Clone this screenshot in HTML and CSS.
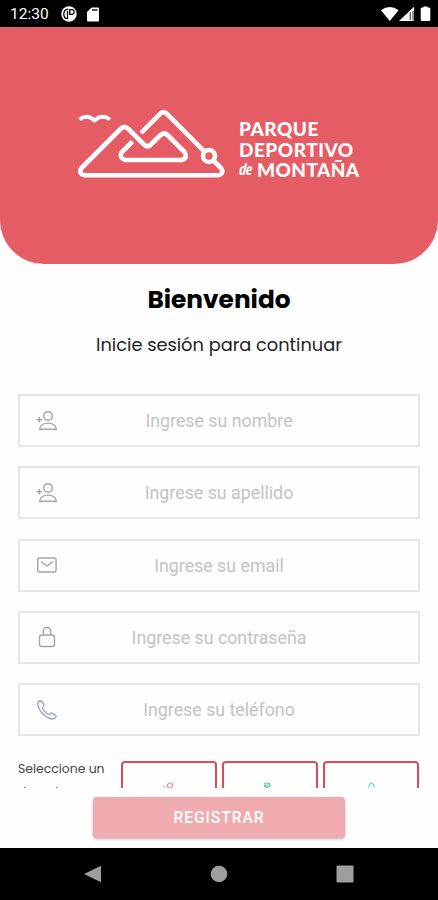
FILE: index.html
```html
<!DOCTYPE html>
<html lang="es">
<head>
	<meta charset="utf-8">
	<title>Parque Deportivo de Montaña</title>
	<link rel="stylesheet" href="styles.css">
</head>
<body>
	<div class="status-bar">
		<span class="time">12:30</span>
		<svg class="app-icon" width="16" height="16" viewBox="0 0 16 16">
			<circle cx="8" cy="8" r="7.7" fill="#fff"/>
			<path d="M7.300 3.200Q2.800 3.500 2.800 8t3.700 4.700V5" fill="none" stroke="#000" stroke-width="1.300"/>
			<path d="M8.800 3.700h2.400q1.900.2 1.900 2.300t-1.900 2.300H8.800z" fill="none" stroke="#000" stroke-width="1.300"/>
		</svg>
		<svg class="card-icon" width="12" height="15" viewBox="0 0 12 15">
			<path d="M4.500.5h6.300q1.200 0 1.200 1.200v11.600q0 1.200-1.200 1.200H1.200Q0 14.500 0 13.300V5z" fill="#fff"/>
			<path d="M5 3h5.500" stroke="#555" stroke-width="2"/>
		</svg>
		<svg class="signals" width="50" height="16" viewBox="0 0 50 16">
			<path d="M0 4.300Q8.800-2.300 17.600 4.300L8.800 15z" fill="#fff"/>
			<path d="M18 15 33 .8V15z" fill="#fff"/>
			<path d="M29.300 6.300v7.500M32 5v9.500" stroke="#444" stroke-width="1.200"/>
			<path d="M42.500 1.500V.5h4v1H48q1.300 0 1.300 1.300v11q0 1.200-1.300 1.200h-7q-1.300 0-1.300-1.200v-11q0-1.300 1.300-1.300z" fill="#fff"/>
		</svg>
	</div>

	<header class="hero">
		<svg class="mountains" width="160" height="90" viewBox="0 0 160 90">
			<g fill="none" stroke="#fff" stroke-width="4.600" stroke-linejoin="round">
				<path d="M71 33 89.500 14.300Q93.500 10.300 97.500 14.300L134 51.200"/>
				<circle cx="139" cy="56" r="6"/>
				<path d="M143.500 60.500 150.500 67.500Q155 73 148.500 75.300H14.500Q8 73.500 11.500 68L50.500 29Q54.500 25 58.500 29L74 44.500Q77.500 48 81 44.500L90 35.500Q94 31.500 98 35.500L114.500 52Q118 58 112 60H55Q49 58 51.500 52.500L62.500 41.500"/>
				<path stroke-width="4" d="M9.500 19.500Q17 13.500 24.500 20.500 32 13.500 40 19.500"/>
			</g>
		</svg>
		<div class="brand">
			<div>PARQUE</div>
			<div>DEPORTIVO</div>
			<div class="brand-last"><i>de</i>MONTAÑA</div>
		</div>
	</header>

	<main class="content">
		<h1>Bienvenido</h1>
		<p class="subtitle">Inicie sesión para continuar</p>

		<form class="form">
			<label class="field">
				<svg width="22" height="22" viewBox="0 0 22 22"><circle cx="12" cy="6" r="4.300"/><path d="M3.500 19.300C4.500 11 19.500 11 20.500 19.300zM3.300 7v5.400M.6 9.700H6"/></svg>
				<input type="text" placeholder="Ingrese su nombre">
			</label>
			<label class="field">
				<svg width="22" height="22" viewBox="0 0 22 22"><circle cx="12" cy="6" r="4.300"/><path d="M3.500 19.300C4.500 11 19.500 11 20.500 19.300zM3.300 7v5.400M.6 9.700H6"/></svg>
				<input type="text" placeholder="Ingrese su apellido">
			</label>
			<label class="field">
				<svg width="22" height="22" viewBox="0 0 22 22"><rect x="1.700" y="4" width="18.400" height="14" rx="2"/><path d="M5 7.500l6 4.500 6-4.500"/></svg>
				<input type="email" placeholder="Ingrese su email">
			</label>
			<label class="field">
				<svg width="22" height="22" viewBox="0 0 22 22"><rect x="3.500" y="9" width="15" height="11.500" rx="2.300"/><path d="M7.300 9V5.200a3.700 3.700 0 0 1 7.400 0V9"/></svg>
				<input type="password" placeholder="Ingrese su contraseña">
			</label>
			<label class="field">
				<svg width="22" height="22" viewBox="0 0 22 22"><path d="M4.500 1.700Q2 2 1.700 4.500C2.500 12 9 19 16.500 20Q19 19.800 20.300 17.500 20.500 16.500 15.500 14.200 14.500 14 13.500 15.300 12.700 16 11.500 15 8 12.500 6.500 9.500 6.200 8.700 7 8.200 8.500 7.300 7.800 5.500 6 1.800 4.500 1.700z"/></svg>
				<input type="tel" placeholder="Ingrese su teléfono">
			</label>

			<div class="sports">
				<p class="sports-label">Seleccione un<br>deporte</p>
				<div class="sport">
					<svg width="24" height="24" viewBox="0 0 24 24" stroke="#f08b91"><circle cx="13" cy="4.500" r="2.500"/><path d="M6.500 5.500h2M11.500 7l-5 7"/></svg>
				</div>
				<div class="sport">
					<svg width="24" height="24" viewBox="0 0 24 24" stroke="#51c9a0"><path d="M6 3.300Q9 1 11.500 2.800 12.500 5.500 9.500 6.500 6.500 6 6.500 4.500l4-.5"/></svg>
				</div>
				<div class="sport">
					<svg width="24" height="24" viewBox="0 0 24 24" stroke="#5fe3cd"><path d="M9.500 6.500 11 3Q12.500 1.200 14 3L15.500 6.500"/></svg>
				</div>
			</div>
		</form>
	</main>

	<div class="actions">
		<button class="register" type="button">REGISTRAR</button>
	</div>

	<nav class="nav-bar">
		<svg width="18" height="18" viewBox="0 0 18 18"><path d="M17 .8v16.400L0 9z"/></svg>
		<svg width="18" height="18" viewBox="0 0 18 18"><circle cx="9" cy="9" r="8.300"/></svg>
		<svg width="18" height="18" viewBox="0 0 18 18"><rect x=".5" y=".5" width="17" height="17" rx="1"/></svg>
	</nav>
</body>
</html>
```

FILE: styles.css
```css
* {
	box-sizing: border-box;
}
body {
	display: flex;
	flex-direction: column;
	width: 438px;
	height: 900px;
	margin: 0;
	overflow: hidden;
	background: #fefefe;
	font-family: Roboto, sans-serif;
}
svg {
	display: block;
	flex: none;
}
.status-bar {
	display: flex;
	flex: none;
	align-items: center;
	height: 27px;
	padding: 1px 7px 0 10px;
	background: #000;
	color: #fff;
}
.time {
	width: 39px;
	font-size: 15.5px;
	font-weight: 400;
}
.app-icon {
	margin-left: 12px;
}
.card-icon {
	margin-left: 10px;
}
.signals {
	margin-left: auto;
}
.hero {
	display: flex;
	flex: none;
	height: 237px;
	padding: 73px 0 0 70px;
	border-radius: 0 0 44px 44px;
	background: #e65c64;
}
.brand {
	display: flex;
	flex-direction: column;
	gap: 1.5px;
	padding-top: 19px;
	padding-left: 9px;
	color: #fff;
	font-family: Lato, sans-serif;
	font-size: 19px;
	font-weight: 900;
	letter-spacing: 0.5px;
	line-height: 19px;
	white-space: nowrap;
}
.brand-last {
	display: flex;
	letter-spacing: 0.4px;
}
.brand i {
	width: 18px;
	font-family: "Open Sans", sans-serif;
	font-size: 16px;
	font-stretch: 75%;
	font-weight: 700;
	letter-spacing: -0.6px;
}
.content {
	flex: none;
	height: 524px;
	overflow: hidden;
}
h1 {
	margin: 18px 0 0;
	font-family: Poppins, Inter, sans-serif;
	font-size: 24.8px;
	font-weight: 700;
	line-height: 36px;
	text-align: center;
}
.subtitle {
	margin: 13px 0 0;
	color: #222;
	font-family: Poppins, Inter, sans-serif;
	font-size: 17.8px;
	line-height: 28px;
	text-align: center;
}
.form {
	display: flex;
	flex-direction: column;
	gap: 19.3px;
	padding: 35px 18px 0;
}
.field {
	display: flex;
	flex: none;
	align-items: center;
	height: 53px;
	padding-left: 16px;
	border: 2px solid #e5e5e8;
}
.field svg {
	fill: none;
	stroke: #9da3bb;
	stroke-width: 1.4;
	stroke-linejoin: round;
}
.field input {
	flex: 1;
	min-width: 0;
	padding: 0 56px 0 18px;
	border: 0;
	outline: 0;
	background: none;
	font-family: Roboto, sans-serif;
	font-size: 17.8px;
	text-align: center;
}
.field input::placeholder {
	color: #c3c3c3;
}
.sports {
	display: flex;
	gap: 5px;
	padding-top: 6px;
}
.sports-label {
	width: 98px;
	margin: -4px 0 0;
	color: #444;
	font-family: Poppins, Inter, sans-serif;
	font-size: 12.4px;
	line-height: 23px;
	white-space: nowrap;
}
.sport {
	display: flex;
	justify-content: center;
	width: 96px;
	height: 90px;
	padding-top: 18px;
	border: 2px solid #dc4c57;
	border-radius: 4px;
}
.sport svg {
	fill: none;
	stroke-width: 1.2;
}
.actions {
	display: flex;
	flex: none;
	justify-content: center;
	height: 60px;
	padding-top: 9px;
}
.register {
	width: 252px;
	height: 41px;
	padding: 0;
	border: 0;
	border-radius: 4px;
	background: #f0abb0;
	box-shadow: 0 1px 3px rgba(0, 0, 0, 0.3);
	color: #fff;
	font-family: Roboto, sans-serif;
	font-size: 15.7px;
	font-weight: 500;
	letter-spacing: 0.9px;
}
.nav-bar {
	display: flex;
	flex: none;
	justify-content: center;
	gap: 108px;
	height: 52px;
	padding-top: 17px;
	background: #000;
}
.nav-bar svg {
	fill: #9e9e9e;
}
```
